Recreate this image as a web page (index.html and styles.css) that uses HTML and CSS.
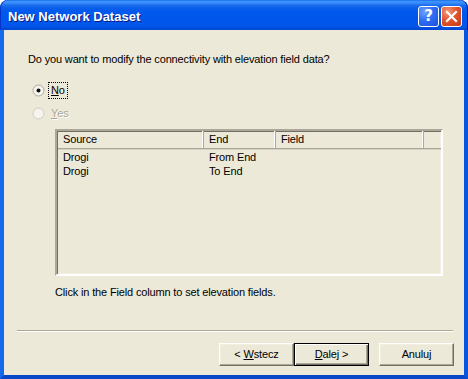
FILE: index.html
```html
<!DOCTYPE html>
<html>
<head>
<meta charset="utf-8">
<link rel="stylesheet" href="styles.css">
</head>
<body>
<div class="window">
  <div class="titlebar">
    <span class="title">New Network Dataset</span>
    <div class="tbuttons">
      <div class="tbtn help"><span>?</span></div>
      <div class="tbtn close">
        <svg width="21" height="21" viewBox="0 0 21 21"><path d="M6 6 L15 15 M15 6 L6 15" stroke="#fff" stroke-width="2.2" stroke-linecap="square"/></svg>
      </div>
    </div>
  </div>
  <div class="client">
    <p class="question">Do you want to modify the connectivity with elevation field data?</p>
    <div class="radios">
      <div class="radio">
        <svg class="rcircle" width="13" height="13" viewBox="0 0 13 13"><circle cx="6.5" cy="6.5" r="5.5" fill="#f5f4ee" stroke="#a9a797" stroke-width="1"/><circle cx="6.5" cy="6.5" r="2" fill="#111"/></svg>
        <span class="rlabel focus"><u>N</u>o</span>
      </div>
      <div class="radio disabled">
        <svg class="rcircle" width="13" height="13" viewBox="0 0 13 13"><circle cx="6.5" cy="6.5" r="5.5" fill="#f5f4ee" stroke="#cfcdbf" stroke-width="1"/></svg>
        <span class="rlabel"><u>Y</u>es</span>
      </div>
    </div>
    <div class="list">
      <div class="lhead">
        <div class="hcell c1">Source</div>
        <div class="hcell c2">End</div>
        <div class="hcell c3">Field</div>
        <div class="hcell c4"></div>
      </div>
      <div class="lrow"><div class="cell c1">Drogi</div><div class="cell c2">From End</div><div class="cell c3"></div></div>
      <div class="lrow"><div class="cell c1">Drogi</div><div class="cell c2">To End</div><div class="cell c3"></div></div>
    </div>
    <p class="note">Click in the Field column to set elevation fields.</p>
    <div class="sep"></div>
    <div class="buttons">
      <div class="btn"><span>&lt;&nbsp;<u>W</u>stecz</span></div>
      <div class="btn default"><span><u>D</u>alej&nbsp;&gt;</span></div>
      <div class="btn gap"><span>Anuluj</span></div>
    </div>
  </div>
</div>
</body>
</html>
```
FILE: styles.css
```css
html, body {
  margin: 0;
  padding: 0;
  background: #ffffff;
}
body {
  font-family: "Liberation Sans", Arial, sans-serif;
  font-size: 11px;
  letter-spacing: -0.15px;
  color: #000;
}
.window {
  width: 468px;
  height: 379px;
  display: flex;
  flex-direction: column;
  box-sizing: border-box;
}
.titlebar {
  height: 30px;
  flex: none;
  border-radius: 8px 8px 0 0;
  background: linear-gradient(to bottom,
    #0a5ee0 0px, #3d95ff 1px, #3a8cfb 3px, #1d6ff0 5px, #0a5fea 8px,
    #0058ee 12px, #0056ea 20px, #0057ec 25px, #004fdf 28px, #0046cf 30px);
  box-shadow: inset 1px 0 0 #0733c9, inset -1px 0 0 #0019a8;
  display: flex;
  align-items: center;
  padding: 0 6px 0 8px;
  box-sizing: border-box;
}
.title {
  flex: 1;
  font-family: "Liberation Sans", Arial, sans-serif;
  font-weight: bold;
  font-size: 13px;
  letter-spacing: 0;
  color: #fff;
  text-shadow: 1px 1px 0 #0a1883;
  padding-top: 2px;
}
.tbuttons {
  display: flex;
  gap: 2px;
  padding-top: 2px;
}
.tbtn {
  width: 21px;
  height: 21px;
  box-sizing: border-box;
  border: 1px solid #ffffff;
  border-radius: 3px;
  display: flex;
  align-items: center;
  justify-content: center;
  position: relative;
}
.tbtn svg {
  position: absolute;
  left: -1px;
  top: -1px;
}
.help {
  background: radial-gradient(circle at 30% 25%, #6fa3ff 0%, #2f6ef5 45%, #1a50d8 100%);
}
.help span {
  color: #fff;
  font-family: "DejaVu Sans", sans-serif;
  font-weight: bold;
  font-size: 15px;
  line-height: 1;
}
.close {
  background: radial-gradient(circle at 30% 25%, #f29a7a 0%, #e2542e 45%, #c43b14 100%);
}
.client {
  flex: 1;
  background: #ece9d8;
  border-left: 4px solid #166aee;
  border-right: 4px solid #0855dd;
  border-bottom: 4px solid #0847c8;
  box-shadow: -1px 0 0 #0831d9, 1px 0 0 #0831d9;
  box-sizing: border-box;
  display: flex;
  flex-direction: column;
  position: relative;
}
.question {
  margin: 23px 0 0 24px;
  line-height: 13px;
}
.radios {
  margin: 16px 0 0 28px;
  display: flex;
  flex-direction: column;
  gap: 7px;
}
.radio {
  display: flex;
  align-items: center;
  height: 16px;
  gap: 3px;
}
.rcircle {
  flex: none;
}
.rlabel {
  padding: 1px 2px;
  line-height: 13px;
  border: 1px dotted transparent;
}
.rlabel.focus {
  border-color: #000;
}
.disabled .rlabel {
  color: #aca899;
  text-shadow: 1px 1px 0 #ffffff;
}
.list {
  margin: 8px 0 0 51px;
  width: 388px;
  height: 147px;
  box-sizing: border-box;
  border-style: solid;
  border-width: 2px;
  border-color: #aca899 #ffffff #ffffff #aca899;
  box-shadow: inset 1px 1px 0 #716f64, inset -1px -1px 0 #f1efe2;
  background: #ece9d8;
  padding: 0 0 0 1px;
}
.lhead {
  display: flex;
  height: 17px;
  border-bottom: 1px solid #aca899;
  box-shadow: 0 1px 0 #d6d2c2;
}
.hcell {
  box-sizing: border-box;
  padding: 2px 0 0 5px;
  border-right: 1px solid #aca899;
  box-shadow: inset -1px 0 0 #ffffff;
  line-height: 13px;
  white-space: nowrap;
}
.hcell.c4 {
  flex: 1;
  border-right: none;
  box-shadow: none;
}
.c1 { width: 146px; }
.c2 { width: 72px; }
.c3 { width: 148px; }
.lrow {
  display: flex;
  height: 14px;
  line-height: 14px;
}
.lhead + .lrow { margin-top: 1px; }
.cell {
  box-sizing: border-box;
  padding-left: 5px;
  white-space: nowrap;
}
.note {
  margin: 10px 0 0 51px;
  line-height: 13px;
}
.sep {
  margin: 31px 0 0 13px;
  width: 436px;
  height: 1px;
  background: #aca899;
  border-bottom: 1px solid #ffffff;
}
.buttons {
  display: flex;
  margin: 11px 0 0 215px;
}
.btn {
  width: 75px;
  height: 23px;
  box-sizing: border-box;
  border-style: solid;
  border-width: 1px;
  border-color: #ffffff #716f64 #716f64 #ffffff;
  box-shadow: inset -1px -1px 0 #aca899, inset 1px 1px 0 #f1efe2;
  background: #ece9d8;
  display: flex;
  align-items: center;
  justify-content: center;
  line-height: 13px;
}
.btn.default {
  border: 1px solid #000;
  box-shadow: inset 1px 1px 0 #ffffff, inset -1px -1px 0 #716f64, inset -2px -2px 0 #aca899;
}
.btn.gap {
  margin-left: 10px;
}
u {
  text-decoration: underline;
  text-underline-offset: 1px;
}
```
